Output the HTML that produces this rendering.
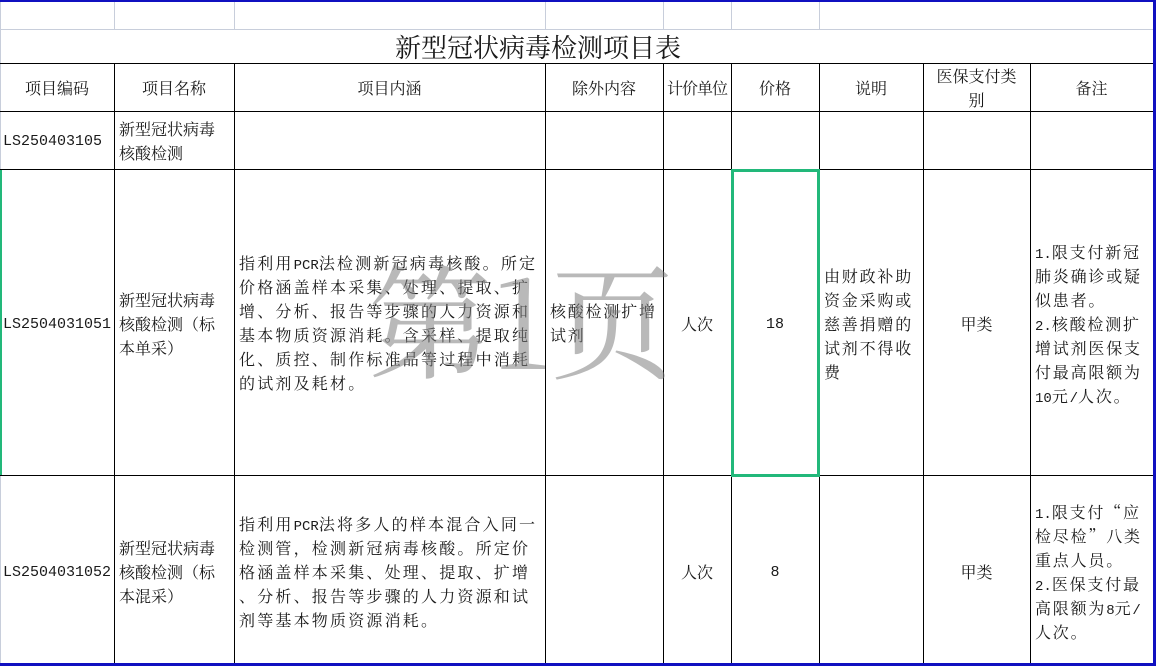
<!DOCTYPE html>
<html><head><meta charset="utf-8"><style>
*{margin:0;padding:0;box-sizing:border-box}
body{width:1156px;height:666px;position:relative;background:#fff;overflow:hidden;font-family:"Noto Serif CJK SC","Liberation Serif",serif;color:#1a1a1a;font-size:16px}
.l{position:absolute;background:#000}
.g{position:absolute;background:#c8cedb}
.t{position:absolute;line-height:24px;white-space:nowrap}
.c{text-align:center}
.m{font-family:"Liberation Mono",monospace;font-size:14px;line-height:0;letter-spacing:0}
.n{font-family:"Liberation Mono",monospace;font-size:15px}
.w{letter-spacing:2.2px}
.s{letter-spacing:1.8px}
</style></head><body>
<div class="g" style="left:0;top:29px;width:1156px;height:1px"></div>
<div class="g" style="left:114px;top:0;width:1px;height:29px"></div>
<div class="g" style="left:234px;top:0;width:1px;height:29px"></div>
<div class="g" style="left:545px;top:0;width:1px;height:29px"></div>
<div class="g" style="left:663px;top:0;width:1px;height:29px"></div>
<div class="g" style="left:731px;top:0;width:1px;height:29px"></div>
<div class="g" style="left:819px;top:0;width:1px;height:29px"></div>
<div class="g" style="left:0;top:0;width:1px;height:666px"></div>
<div style="position:absolute;left:0;top:170px;width:2px;height:306px;background:#22b87a"></div>
<div style="position:absolute;left:162px;top:0;width:75px;height:2px;background:#22b87a"></div>
<div class="t c" style="left:0;top:30px;width:1076px;font-size:26px;line-height:34px">新型冠状病毒检测项目表</div>
<div class="l" style="left:0;top:63px;width:1153px;height:1px"></div>
<div class="l" style="left:0;top:111px;width:1153px;height:1px"></div>
<div class="l" style="left:0;top:169px;width:1153px;height:1px"></div>
<div class="l" style="left:0;top:475px;width:1153px;height:1px"></div>
<div class="l" style="left:114px;top:63px;width:1px;height:603px"></div>
<div class="l" style="left:234px;top:63px;width:1px;height:603px"></div>
<div class="l" style="left:545px;top:63px;width:1px;height:603px"></div>
<div class="l" style="left:663px;top:63px;width:1px;height:603px"></div>
<div class="l" style="left:731px;top:63px;width:1px;height:603px"></div>
<div class="l" style="left:819px;top:63px;width:1px;height:603px"></div>
<div class="l" style="left:923px;top:63px;width:1px;height:603px"></div>
<div class="l" style="left:1030px;top:63px;width:1px;height:603px"></div>
<div style="position:absolute;left:0;top:0;width:1156px;height:2px;background:#1010c0"></div>
<div style="position:absolute;left:1153px;top:0;width:3px;height:666px;background:#1010c0"></div>
<div style="position:absolute;left:0;top:663px;width:1156px;height:3px;background:#1010c0"></div>
<div class="t c" style="left:0;top:76px;width:114px">项目编码</div>
<div class="t c" style="left:114px;top:76px;width:120px">项目名称</div>
<div class="t c" style="left:234px;top:76px;width:311px">项目内涵</div>
<div class="t c" style="left:545px;top:76px;width:118px">除外内容</div>
<div class="t c" style="left:663px;top:76px;width:68px;letter-spacing:-1px">计价单位</div>
<div class="t c" style="left:731px;top:76px;width:88px">价格</div>
<div class="t c" style="left:819px;top:76px;width:104px">说明</div>
<div class="t c" style="left:923px;top:64px;width:107px">医保支付类<br>别</div>
<div class="t c" style="left:1030px;top:76px;width:123px">备注</div>
<div class="t n" style="left:3px;top:130px">LS250403105</div>
<div class="t" style="left:119px;top:117px">新型冠状病毒<br>核酸检测</div>
<div class="t n" style="left:3px;top:313px">LS2504031051</div>
<div class="t" style="left:119px;top:288px">新型冠状病毒<br>核酸检测（标<br>本单采）</div>
<div class="t w" style="left:239px;top:251px">指利用<span class="m">PCR</span>法检测新冠病毒核酸。所定<br>价格涵盖样本采集、处理、提取、扩<br>增、分析、报告等步骤的人力资源和<br>基本物质资源消耗。含采样、提取纯<br>化、质控、制作标准品等过程中消耗<br>的试剂及耗材。</div>
<div class="t s" style="left:550px;top:299px">核酸检测扩增<br>试剂</div>
<div class="t c" style="left:663px;top:312px;width:68px">人次</div>
<div class="t c n" style="left:731px;top:313px;width:88px">18</div>
<div class="t s" style="left:824px;top:264px">由财政补助<br>资金采购或<br>慈善捐赠的<br>试剂不得收<br>费</div>
<div class="t c" style="left:923px;top:312px;width:107px">甲类</div>
<div class="t s" style="left:1035px;top:240px"><span class="m">1.</span>限支付新冠<br>肺炎确诊或疑<br>似患者。<br><span class="m">2.</span>核酸检测扩<br>增试剂医保支<br>付最高限额为<br><span class="m">10</span>元<span class="m">/</span>人次。</div>
<div class="t n" style="left:3px;top:561px">LS2504031052</div>
<div class="t" style="left:119px;top:536px">新型冠状病毒<br>核酸检测（标<br>本混采）</div>
<div class="t w" style="left:239px;top:512px">指利用<span class="m">PCR</span>法将多人的样本混合入同一<br>检测管，检测新冠病毒核酸。所定价<br>格涵盖样本采集、处理、提取、扩增<br>、分析、报告等步骤的人力资源和试<br>剂等基本物质资源消耗。</div>
<div class="t c" style="left:663px;top:560px;width:68px">人次</div>
<div class="t c n" style="left:731px;top:561px;width:88px">8</div>
<div class="t c" style="left:923px;top:560px;width:107px">甲类</div>
<div class="t s" style="left:1035px;top:500px"><span class="m">1.</span>限支付“应<br>检尽检”八类<br>重点人员。<br><span class="m">2.</span>医保支付最<br>高限额为<span class="m">8</span>元<span class="m">/</span><br>人次。</div>
<div style="position:absolute;left:731px;top:169px;width:89px;height:308px;border:3px solid #22b87a"></div>
<div class="t" style="left:368px;top:248px;font-size:124px;line-height:136px;color:rgba(128,128,128,0.55);font-family:'Noto Serif CJK SC',serif">第1页</div>
</body></html>
